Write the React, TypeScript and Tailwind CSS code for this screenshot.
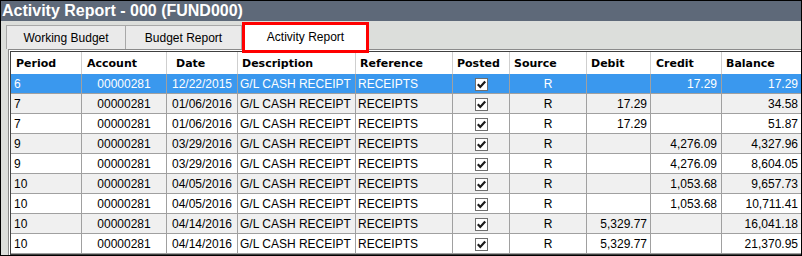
import React from "react";

type Col = {
  key: string;
  title: string;
  width: string;
  align: string;
  headPad: string;
};

const columns: Col[] = [
  { key: "period", title: "Period", width: "w-[71px]", align: "justify-start pl-[3px]", headPad: "pl-[5px]" },
  { key: "account", title: "Account", width: "w-[85px]", align: "justify-center", headPad: "pl-[5px]" },
  { key: "date", title: "Date", width: "w-[71px]", align: "justify-center", headPad: "pl-[9px]" },
  { key: "description", title: "Description", width: "w-[118px]", align: "justify-start pl-[2px]", headPad: "pl-[4px]" },
  { key: "reference", title: "Reference", width: "w-[97px]", align: "justify-start pl-[2px]", headPad: "pl-[4px]" },
  { key: "posted", title: "Posted", width: "w-[57px]", align: "justify-center", headPad: "pl-[4px]" },
  { key: "source", title: "Source", width: "w-[77px]", align: "justify-center", headPad: "pl-[4px]" },
  { key: "debit", title: "Debit", width: "w-[64px]", align: "justify-end pr-[3px]", headPad: "pl-[4px]" },
  { key: "credit", title: "Credit", width: "w-[71px]", align: "justify-end pr-[4px]", headPad: "pl-[5px]" },
  { key: "balance", title: "Balance", width: "flex-1", align: "justify-end pr-[3px]", headPad: "pl-[4px]" },
];

const rows = [
  { period: "6", date: "12/22/2015", debit: "", credit: "17.29", balance: "17.29" },
  { period: "7", date: "01/06/2016", debit: "17.29", credit: "", balance: "34.58" },
  { period: "7", date: "01/06/2016", debit: "17.29", credit: "", balance: "51.87" },
  { period: "9", date: "03/29/2016", debit: "", credit: "4,276.09", balance: "4,327.96" },
  { period: "9", date: "03/29/2016", debit: "", credit: "4,276.09", balance: "8,604.05" },
  { period: "10", date: "04/05/2016", debit: "", credit: "1,053.68", balance: "9,657.73" },
  { period: "10", date: "04/05/2016", debit: "", credit: "1,053.68", balance: "10,711.41" },
  { period: "10", date: "04/14/2016", debit: "5,329.77", credit: "", balance: "16,041.18" },
  { period: "10", date: "04/14/2016", debit: "5,329.77", credit: "", balance: "21,370.95" },
];

function CheckBox() {
  return (
    <div className="flex h-[13px] w-[13px] items-center justify-center border border-[#6e6e6e] bg-white">
      <svg width="11" height="11" viewBox="0 0 11 11">
        <path d="M1.8 5.2 L4.3 7.9 L9.2 2.4" fill="none" stroke="#1a1a1a" strokeWidth="2.2" />
      </svg>
    </div>
  );
}

export default function App() {
  return (
    <div className="flex h-[256px] w-[802px] flex-col border border-black bg-[#dcdedb] font-['Liberation_Sans',Arial,sans-serif]">
      {/* title bar */}
      <div className="flex h-[20px] items-center bg-[#5e6979] pl-[1px] text-[16px] font-bold leading-[20px] text-white">
        Activity Report - 000 (FUND000)
      </div>

      {/* tabs */}
      <div className="flex h-[28px] pl-[5px] text-[12px] text-black">
        <div className="mt-[4px] flex h-[24px] w-[120px] items-center justify-center border-l border-t border-r border-[#a8a8a8] bg-[#eaeaea]">
          Working Budget
        </div>
        <div className="mt-[4px] flex h-[24px] w-[116px] items-center justify-center border-t border-r border-[#a8a8a8] bg-[#eaeaea]">
          Budget Report
        </div>
        <div className="relative z-10 mt-[1px] flex h-[31px] w-[127px] items-center justify-center border-[3px] border-[#ff0000] bg-white pb-[2px]">
          Activity Report
        </div>
      </div>

      {/* grid */}
      <div className="ml-[7px] flex-1 border-l border-t border-[#8a8a8a]">
        <div className="h-full border-l border-t border-white">
          <div className="flex h-full flex-col border-l border-t border-b border-[#404040] bg-white">
            <div className="flex h-[22px] bg-white font-['DejaVu_Sans',Verdana,sans-serif] text-[11px] font-bold text-black">
              {columns.map((c, i) => (
                <div
                  key={c.key}
                  className={`${c.width} ${c.headPad} flex items-center pt-[3px] ${
                    i < columns.length - 1 ? "border-r border-[#cfcfcf]" : ""
                  }`}
                >
                  {c.title}
                </div>
              ))}
            </div>
            {rows.map((r, idx) => {
              const selected = idx === 0;
              const bg = selected ? "bg-[#3a98ee] text-white" : idx % 2 === 1 ? "bg-[#f0f0f0] text-black" : "bg-white text-black";
              const values: Record<string, React.ReactNode> = {
                period: r.period,
                account: "00000281",
                date: r.date,
                description: "G/L CASH RECEIPT",
                reference: "RECEIPTS",
                posted: <CheckBox />,
                source: "R",
                debit: r.debit,
                credit: r.credit,
                balance: r.balance,
              };
              return (
                <div key={idx} className={`flex h-[20px] border-b border-[#a0a0a0] text-[12px] ${bg}`}>
                  {columns.map((c, i) => (
                    <div
                      key={c.key}
                      className={`${c.width} ${c.align} flex items-center whitespace-nowrap pt-[1px] ${
                        i < columns.length - 1 ? "border-r border-[#a0a0a0]" : ""
                      }`}
                    >
                      {values[c.key]}
                    </div>
                  ))}
                </div>
              );
            })}
          </div>
        </div>
      </div>
    </div>
  );
}
